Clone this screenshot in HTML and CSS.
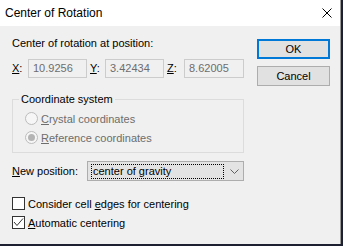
FILE: index.html
```html
<!DOCTYPE html>
<html lang="en">
<head>
    <meta charset="UTF-8">
    <title>Center of Rotation</title>
    <link rel="stylesheet" href="styles.css">
</head>
<body>

    <div class="window">
        <div class="titlebar">
            <span class="title">Center of Rotation</span>
            <svg class="close" width="10" height="10" viewBox="0 0 10 10">
                <path d="M0.5 0.5 L9.5 9.5 M9.5 0.5 L0.5 9.5" stroke="#000" stroke-width="1" fill="none"/>
            </svg>
        </div>

        <div class="content">
            <div class="main">
                <div class="heading">Center of rotation at position:</div>

                <div class="coords">
                    <span class="lbl lbl-x"><u>X</u>:</span>
                    <span class="field fx">10.9256</span>
                    <span class="lbl lbl-y"><u>Y</u>:</span>
                    <span class="field fy">3.42434</span>
                    <span class="lbl lbl-z"><u>Z</u>:</span>
                    <span class="field fz">8.62005</span>
                </div>

                <fieldset class="group">
                    <legend>Coordinate system</legend>
                    <div class="radio">
                        <span class="circle"></span>
                        <span><u>C</u>rystal coordinates</span>
                    </div>
                    <div class="radio">
                        <span class="circle checked"></span>
                        <span><u>R</u>eference coordinates</span>
                    </div>
                </fieldset>

                <div class="newpos">
                    <span class="newpos-label"><u>N</u>ew position:</span>
                    <div class="combo">
                        <span class="focus">center of gravity</span>
                        <svg class="chevron" width="9" height="5" viewBox="0 0 9 5">
                            <path d="M0.5 0.5 L4.5 4.5 L8.5 0.5" stroke="#606060" stroke-width="1" fill="none"/>
                        </svg>
                    </div>
                </div>

                <div class="check">
                    <span class="box"></span>
                    <span>Consider cell <u>e</u>dges for centering</span>
                </div>
                <div class="check">
                    <span class="box">
                        <svg width="11" height="11" viewBox="0 0 11 11">
                            <path d="M1 5 L4 8.5 L10 1.5" stroke="#333" stroke-width="1" fill="none"/>
                        </svg>
                    </span>
                    <span><u>A</u>utomatic centering</span>
                </div>
            </div>

            <div class="buttons">
                <div class="btn btn-default">OK</div>
                <div class="btn">Cancel</div>
            </div>
        </div>
    </div>

</body>
</html>
```

FILE: styles.css
```css
body {
    margin: 0;
    background: #1d2030;
    font-family: "Liberation Sans", Arial, sans-serif;
    font-size: 11px;
    color: #000;
}
.window {
    width: 341px;
    height: 244px;
    background: #f0f0f0;
    box-sizing: border-box;
    border-right: 1px solid #9a9a9a;
}
.titlebar {
    height: 26px;
    background: #fff;
    display: flex;
    align-items: center;
    justify-content: space-between;
}
.title {
    padding-left: 5px;
    font-size: 12px;
}
.close {
    margin-right: 8px;
}
.content {
    display: flex;
    padding-left: 12px;
}
.main {
    width: 232px;
    padding-top: 11px;
}
.heading {
    line-height: 13px;
}
.coords {
    display: flex;
    align-items: center;
    margin-top: 9px;
    height: 19px;
}
.lbl {
    line-height: 13px;
}
.lbl-x { width: 16px; }
.lbl-y { width: 15px; margin-left: 3px; }
.lbl-z { width: 17px; margin-left: 3px; }
.field {
    box-sizing: border-box;
    height: 19px;
    width: 59px;
    border: 1px solid #cccccc;
    color: #6d6d6d;
    padding-left: 4px;
    line-height: 17px;
}
.fz { width: 60px; }
.group {
    margin: 14px 0 0 0;
    padding: 3px 0 5px 12px;
    width: 232px;
    box-sizing: border-box;
    border: 1px solid #dcdcdc;
    min-width: 0;
}
.group legend {
    margin-left: -6px;
    padding: 0 2px;
    line-height: 14px;
}
.radio {
    display: flex;
    align-items: center;
    height: 19px;
    color: #6d6d6d;
}
.circle {
    width: 13px;
    height: 13px;
    box-sizing: border-box;
    border: 1px solid #bcbcbc;
    border-radius: 50%;
    background: #f6f6f6;
    margin-right: 3px;
    display: flex;
    align-items: center;
    justify-content: center;
}
.circle.checked::after {
    content: "";
    width: 7px;
    height: 7px;
    border-radius: 50%;
    background: #b4b4b4;
}
.newpos {
    display: flex;
    align-items: center;
    margin-top: 8px;
    height: 20px;
}
.newpos-label {
    width: 75px;
}
.combo {
    box-sizing: border-box;
    width: 157px;
    height: 20px;
    border: 1px solid #adadad;
    background: #e3e3e3;
    display: flex;
    align-items: center;
    padding: 0 0 0 3px;
}
.focus {
    box-sizing: border-box;
    width: 133px;
    height: 15px;
    border: 1px dotted #000;
    line-height: 13px;
    padding-left: 1px;
}
.chevron {
    margin-left: 6px;
}
.check {
    display: flex;
    align-items: center;
    height: 19px;
}
.newpos + .check {
    margin-top: 13px;
}
.box {
    width: 13px;
    height: 13px;
    box-sizing: border-box;
    border: 1px solid #333;
    background: #fff;
    margin-right: 3px;
    display: flex;
}
.buttons {
    margin-left: 13px;
    padding-top: 13px;
}
.btn {
    box-sizing: border-box;
    width: 73px;
    height: 20px;
    border: 1px solid #adadad;
    background: #e1e1e1;
    display: flex;
    align-items: center;
    justify-content: center;
    margin-bottom: 7px;
}
.btn-default {
    border: 2px solid #0078d7;
}
```
